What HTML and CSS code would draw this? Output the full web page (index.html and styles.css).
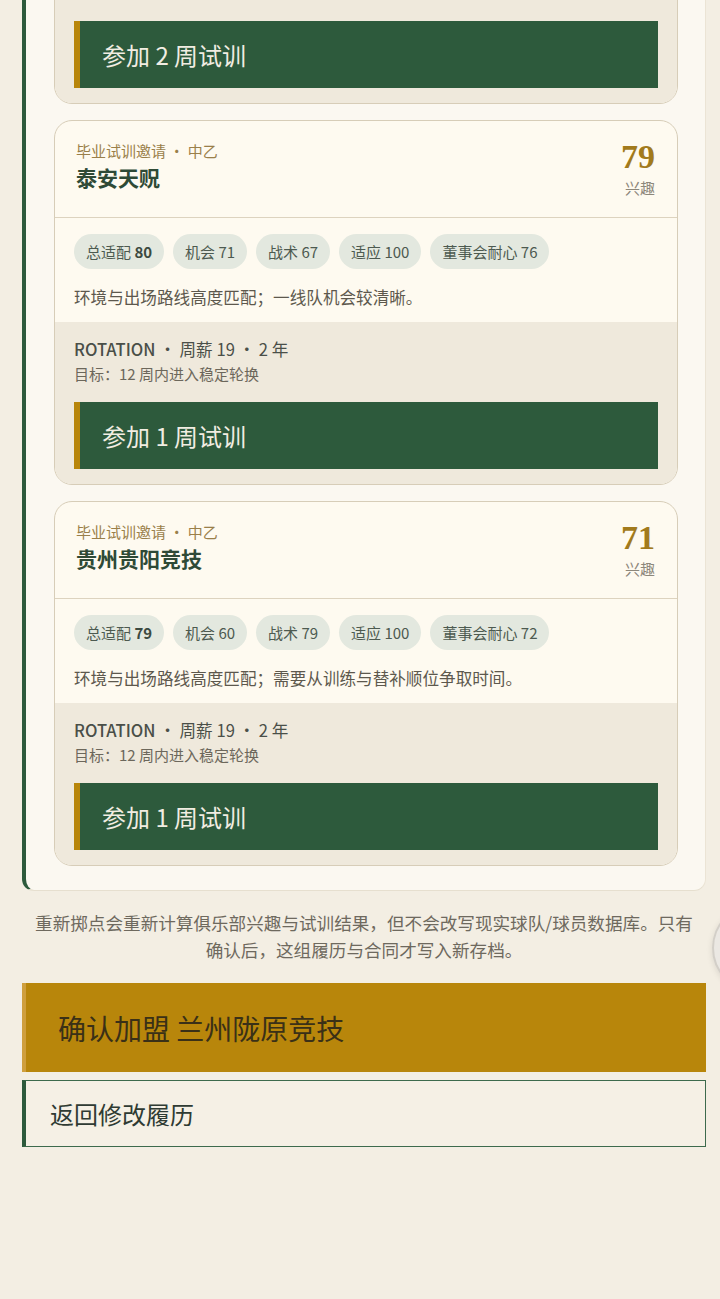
FILE: index.html
```html
<!DOCTYPE html>
<html lang="zh-CN">
<head>
  <meta charset="utf-8">
  <link rel="stylesheet" href="styles.css">
</head>
<body>
  <div class="page">
    <div class="panel">
      <div class="offer">
        <div class="offer-head">
          <div class="offer-name">
            <div class="offer-meta">毕业试训邀请 · 中乙</div>
            <div class="offer-club">南通海门珂缔缘</div>
          </div>
          <div class="offer-score">
            <div class="score-num">84</div>
            <div class="score-label">兴趣</div>
          </div>
        </div>
        <div class="offer-body">
          <div class="chips">
            <span class="chip">总适配 <b>82</b></span>
            <span class="chip">机会 74</span>
            <span class="chip">战术 70</span>
            <span class="chip">适应 100</span>
            <span class="chip">董事会耐心 78</span>
          </div>
          <p class="offer-desc">环境与出场路线高度匹配；一线队机会较清晰。</p>
        </div>
        <div class="offer-foot">
          <div class="terms"><b>ROTATION</b> · 周薪 20 · 2 年</div>
          <div class="goal">目标：12 周内进入稳定轮换</div>
          <button class="trial-btn trial-btn--spaced">参加 2 周试训</button>
        </div>
      </div>

      <div class="offer">
        <div class="offer-head">
          <div class="offer-name">
            <div class="offer-meta">毕业试训邀请 · 中乙</div>
            <div class="offer-club">泰安天贶</div>
          </div>
          <div class="offer-score">
            <div class="score-num">79</div>
            <div class="score-label">兴趣</div>
          </div>
        </div>
        <div class="offer-body">
          <div class="chips">
            <span class="chip">总适配 <b>80</b></span>
            <span class="chip">机会 71</span>
            <span class="chip">战术 67</span>
            <span class="chip">适应 100</span>
            <span class="chip">董事会耐心 76</span>
          </div>
          <p class="offer-desc">环境与出场路线高度匹配；一线队机会较清晰。</p>
        </div>
        <div class="offer-foot">
          <div class="terms"><b>ROTATION</b> · 周薪 19 · 2 年</div>
          <div class="goal">目标：12 周内进入稳定轮换</div>
          <button class="trial-btn">参加 1 周试训</button>
        </div>
      </div>

      <div class="offer">
        <div class="offer-head">
          <div class="offer-name">
            <div class="offer-meta">毕业试训邀请 · 中乙</div>
            <div class="offer-club">贵州贵阳竞技</div>
          </div>
          <div class="offer-score">
            <div class="score-num">71</div>
            <div class="score-label">兴趣</div>
          </div>
        </div>
        <div class="offer-body">
          <div class="chips">
            <span class="chip">总适配 <b>79</b></span>
            <span class="chip">机会 60</span>
            <span class="chip">战术 79</span>
            <span class="chip">适应 100</span>
            <span class="chip">董事会耐心 72</span>
          </div>
          <p class="offer-desc">环境与出场路线高度匹配；需要从训练与替补顺位争取时间。</p>
        </div>
        <div class="offer-foot">
          <div class="terms"><b>ROTATION</b> · 周薪 19 · 2 年</div>
          <div class="goal">目标：12 周内进入稳定轮换</div>
          <button class="trial-btn">参加 1 周试训</button>
        </div>
      </div>
    </div>

    <p class="note">重新掷点会重新计算俱乐部兴趣与试训结果，但不会改写现实球队/球员数据库。只有确认后，这组履历与合同才写入新存档。</p>

    <button class="confirm-btn">确认加盟 兰州陇原竞技</button>
    <button class="back-btn">返回修改履历</button>
  </div>

  <div class="fab"></div>
</body>
</html>
```

FILE: styles.css
```css
html, body {
  margin: 0;
  background: #f3eee3;
  font-family: "Noto Sans CJK SC", "Noto Sans", sans-serif;
  overflow: hidden;
}

.page {
  margin: 0 14px 0 22px;
}

.panel {
  margin-top: -287px;
  padding: 20px 27px 24px 28px;
  background: #fbf8f1;
  border-left: 4px solid #2d5a3c;
  border-right: 1px solid #ebe4d5;
  border-bottom: 1px solid #e6dfcf;
  border-radius: 0 0 12px 12px;
  display: flex;
  flex-direction: column;
  gap: 16px;
}

.offer {
  border: 1px solid #d7cdb8;
  border-radius: 18px;
  overflow: hidden;
  background: #fefaf0;
}

.offer-head {
  display: flex;
  justify-content: space-between;
  align-items: flex-start;
  padding: 17px 22px 18px 21px;
  border-bottom: 1px solid #ddd3bf;
}

.offer-name {
  padding-top: 2px;
}

.offer-meta {
  font-size: 15px;
  line-height: 22px;
  color: #9a7f4a;
}

.offer-club {
  font-size: 21px;
  line-height: 30px;
  font-weight: 700;
  color: #2f4a36;
}

.offer-score {
  text-align: right;
}

.score-num {
  font-family: "Liberation Serif", serif;
  font-weight: 700;
  font-size: 34px;
  line-height: 38px;
  color: #a27a1c;
}

.score-label {
  margin-top: 1px;
  font-size: 15px;
  line-height: 22px;
  color: #8d877b;
}

.offer-body {
  padding: 16px 20px 13px 19px;
}

.chips {
  display: flex;
  gap: 9px;
}

.chip {
  height: 35px;
  line-height: 35px;
  padding: 0 12px;
  border-radius: 18px;
  background: #e3e8df;
  color: #4d5a50;
  font-size: 15px;
  white-space: nowrap;
}

.chip b {
  font-weight: 700;
  color: #3c4a40;
}

.offer-desc {
  margin: 16px 0 0;
  font-size: 16.6px;
  line-height: 24px;
  color: #5d584d;
}

.offer-foot {
  background: #efe9dc;
  padding: 15px 19px 15px 19px;
}

.terms {
  font-size: 16.6px;
  line-height: 24px;
  color: #4a4f48;
}

.terms b {
  font-weight: 500;
}

.goal {
  margin-top: 2px;
  font-size: 15px;
  line-height: 22px;
  color: #6c675b;
}

.trial-btn {
  display: block;
  width: 100%;
  height: 67px;
  margin-top: 17px;
  padding: 0 0 0 22px;
  border: none;
  border-left: 6px solid #b8860b;
  background: #2d5a3c;
  color: #f1ede2;
  font-family: "Noto Sans CJK SC", "Noto Sans", sans-serif;
  font-size: 24px;
  text-align: left;
  cursor: pointer;
}

.trial-btn--spaced {
  margin-top: 23px;
}

.note {
  margin: 18px 0 0;
  padding: 0 10px;
  text-align: center;
  font-size: 17.6px;
  line-height: 27px;
  color: #6e695e;
}

.confirm-btn {
  display: block;
  width: 100%;
  height: 89px;
  margin-top: 20px;
  padding: 0 0 0 32px;
  border: none;
  border-left: 4px solid #cf9f3e;
  background: #b8860b;
  color: #3a3017;
  font-family: "Noto Sans CJK SC", "Noto Sans", sans-serif;
  font-size: 28px;
  text-align: left;
}

.back-btn {
  display: block;
  width: 100%;
  height: 67px;
  margin-top: 8px;
  padding: 0 0 0 24px;
  border: 1px solid #3d6a4c;
  border-left: 4px solid #2d5a3c;
  background: #f5f0e5;
  color: #2f3b33;
  font-family: "Noto Sans CJK SC", "Noto Sans", sans-serif;
  font-size: 24px;
  text-align: left;
}

.fab {
  position: fixed;
  left: 712px;
  top: 904px;
  width: 84px;
  height: 84px;
  border-radius: 50%;
  background: #ebe8e3;
  border: 2px solid #d3cfc8;
  box-shadow: 0 2px 6px rgba(0, 0, 0, 0.1);
}
```
